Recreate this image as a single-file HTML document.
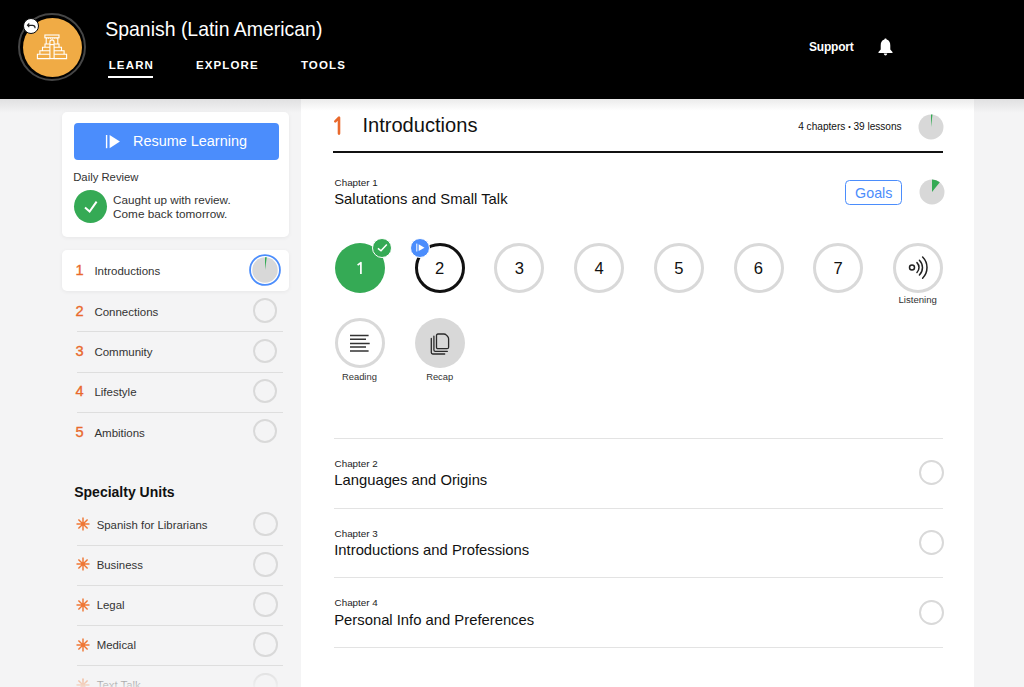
<!DOCTYPE html>
<html><head><meta charset="utf-8">
<style>
*{box-sizing:border-box;margin:0;padding:0}
html,body{width:1024px;height:687px;overflow:hidden;background:#f4f4f5;font-family:"Liberation Sans",sans-serif;color:#222}
.a{position:absolute;white-space:nowrap}
svg.a{overflow:visible}
</style></head><body>
<div class="a" style="left:0px;top:0px;width:1024px;height:99px;background:#000;"></div>
<div class="a" style="left:0px;top:99px;width:1024px;height:14px;background:linear-gradient(#e0e0e1,rgba(244,244,245,0));"></div>
<div class="a" style="left:18.00px;top:13.00px;width:68px;height:68px;border-radius:50%;border:2.4px solid #464646;background:transparent;"></div>
<div class="a" style="left:22.50px;top:17.50px;width:59px;height:59px;border-radius:50%;border:0px solid #f0ab45;background:#f0ab45;"></div>
<svg class="a" style="left:36px;top:33px" width="32" height="28" viewBox="0 0 32 28" fill="none" stroke="#fff" stroke-width="1.1">
<rect x="8.9" y="2" width="14.1" height="2.8"/>
<path d="M10.2 5.3 H21.8" stroke-dasharray="0.9 1" stroke-width="1"/>
<path d="M10.2 4.8 V11 M21.8 4.8 V11"/>
<path d="M13.9 11.3 V9 A2.1 2.1 0 0 1 18.1 9 V11.3"/>
<rect x="13.9" y="11.6" width="4.2" height="14"/>
<path d="M13.9 11 H9 V14.2 H6.5 V17.7 H3.9 V21.2 H1.4 V25.6 H13.9 M9 14.2 H13.9 M6.5 17.7 H13.9 M3.9 21.2 H13.9"/>
<path d="M18.1 11 H23 V14.2 H25.5 V17.7 H28.1 V21.2 H30.6 V25.6 H18.1 M23 14.2 H18.1 M25.5 17.7 H18.1 M28.1 21.2 H18.1"/>
</svg>
<div class="a" style="left:22.60px;top:17.80px;width:16.5px;height:16.5px;border-radius:50%;border:1.6px solid #0a0a0a;background:#fff;"></div>
<svg class="a" style="left:25px;top:20px" width="12" height="12" viewBox="0 0 12 12" fill="none" stroke="#222" stroke-width="1.15"><path d="M4.3 3.5 L2.5 5.3 L4.3 7.1"/><path d="M2.7 5.3 H7.6 Q10 5.3 10 7.6 V8.2"/></svg>
<div class="a" style="left:105.24px;top:19.74px;font-size:19.45px;line-height:19.45px;font-weight:400;color:#fff;">Spanish (Latin American)</div>
<div class="a" style="left:108.69px;top:59.97px;font-size:11.5px;line-height:11.5px;font-weight:700;color:#fff;letter-spacing:1.15px;">LEARN</div>
<div class="a" style="left:108px;top:76px;width:45px;height:2px;background:#fff;"></div>
<div class="a" style="left:195.89px;top:59.97px;font-size:11.5px;line-height:11.5px;font-weight:700;color:#fff;letter-spacing:1.15px;">EXPLORE</div>
<div class="a" style="left:300.89px;top:59.97px;font-size:11.5px;line-height:11.5px;font-weight:700;color:#fff;letter-spacing:1.15px;">TOOLS</div>
<div class="a" style="left:808.96px;top:40.84px;font-size:12px;line-height:12px;font-weight:700;color:#fff;letter-spacing:-0.2px;">Support</div>
<svg class="a" style="left:878px;top:38px" width="15" height="18" viewBox="0 0 15 18" fill="#fff"><path d="M7.5 0.5 C8.3 0.5 8.6 1 8.6 1.6 C11.3 2.3 12.3 4.6 12.3 7.5 V11.5 L14.5 14 V15 H0.5 V14 L2.7 11.5 V7.5 C2.7 4.6 3.7 2.3 6.4 1.6 C6.4 1 6.7 0.5 7.5 0.5 Z"/><path d="M5.8 15.6 H9.2 C9.2 16.7 8.5 17.4 7.5 17.4 C6.5 17.4 5.8 16.7 5.8 15.6Z"/></svg>
<div class="a" style="left:301px;top:99px;width:673px;height:588px;background:#fff;"></div>
<div class="a" style="left:301px;top:99px;width:673px;height:12px;background:linear-gradient(#ebebeb,rgba(255,255,255,0));"></div>
<div class="a" style="left:62px;top:112px;width:227px;height:125px;background:#fff;border-radius:5px;box-shadow:0 1px 4px rgba(0,0,0,0.06)"></div>
<div class="a" style="left:74px;top:122.5px;width:205px;height:37.5px;background:#4b8dfc;border-radius:4px"></div>
<svg class="a" style="left:104px;top:134px" width="18" height="16" viewBox="0 0 18 16" fill="#fff"><rect x="1.9" y="1" width="1.4" height="13.2"/><path d="M5.6 1 L15.9 7.6 L5.6 14.2 Z"/></svg>
<div class="a" style="left:132.99px;top:134.47px;font-size:14.45px;line-height:14.45px;font-weight:400;color:#fff;">Resume Learning</div>
<div class="a" style="left:73.21px;top:172.03px;font-size:11.3px;line-height:11.3px;font-weight:400;color:#333;">Daily Review</div>
<div class="a" style="left:74.20px;top:190.20px;width:33px;height:33px;border-radius:50%;border:0px solid #35aa55;background:#35aa55;"></div>
<svg class="a" style="left:80px;top:197px" width="22" height="20" viewBox="0 0 22 20" fill="none" stroke="#fff" stroke-width="2"><path d="M5 10.5 L9.6 14.5 L16.6 4.6"/></svg>
<div class="a" style="left:113.08px;top:193.90px;font-size:11.7px;line-height:11.7px;font-weight:400;color:#333;">Caught up with review.</div>
<div class="a" style="left:113.08px;top:208.15px;font-size:11.75px;line-height:11.75px;font-weight:400;color:#333;">Come back tomorrow.</div>
<div class="a" style="left:62px;top:250.3px;width:227px;height:40.4px;background:#fff;border-radius:5px;box-shadow:0 1px 4px rgba(0,0,0,0.06)"></div>
<div class="a" style="left:75.38px;top:263.24px;font-size:14.6px;line-height:14.6px;font-weight:400;color:#e9692c;-webkit-text-stroke:0.35px #e9692c;">1</div>
<div class="a" style="left:94.39px;top:266.17px;font-size:11.5px;line-height:11.5px;font-weight:400;color:#333;">Introductions</div>
<div class="a" style="left:75.38px;top:304.04px;font-size:14.6px;line-height:14.6px;font-weight:400;color:#e9692c;-webkit-text-stroke:0.35px #e9692c;">2</div>
<div class="a" style="left:94.39px;top:306.97px;font-size:11.5px;line-height:11.5px;font-weight:400;color:#333;">Connections</div>
<div class="a" style="left:252.75px;top:298.35px;width:24.5px;height:24.5px;border-radius:50%;border:2px solid #d9d9d9;background:transparent;"></div>
<div class="a" style="left:75.38px;top:344.24px;font-size:14.6px;line-height:14.6px;font-weight:400;color:#e9692c;-webkit-text-stroke:0.35px #e9692c;">3</div>
<div class="a" style="left:94.39px;top:347.17px;font-size:11.5px;line-height:11.5px;font-weight:400;color:#333;">Community</div>
<div class="a" style="left:252.75px;top:338.55px;width:24.5px;height:24.5px;border-radius:50%;border:2px solid #d9d9d9;background:transparent;"></div>
<div class="a" style="left:75.38px;top:384.44px;font-size:14.6px;line-height:14.6px;font-weight:400;color:#e9692c;-webkit-text-stroke:0.35px #e9692c;">4</div>
<div class="a" style="left:94.39px;top:387.37px;font-size:11.5px;line-height:11.5px;font-weight:400;color:#333;">Lifestyle</div>
<div class="a" style="left:252.75px;top:378.75px;width:24.5px;height:24.5px;border-radius:50%;border:2px solid #d9d9d9;background:transparent;"></div>
<div class="a" style="left:75.38px;top:424.64px;font-size:14.6px;line-height:14.6px;font-weight:400;color:#e9692c;-webkit-text-stroke:0.35px #e9692c;">5</div>
<div class="a" style="left:94.39px;top:427.57px;font-size:11.5px;line-height:11.5px;font-weight:400;color:#333;">Ambitions</div>
<div class="a" style="left:252.75px;top:418.95px;width:24.5px;height:24.5px;border-radius:50%;border:2px solid #d9d9d9;background:transparent;"></div>
<div class="a" style="left:76.5px;top:331.4px;width:206px;height:1px;background:#dedede;"></div>
<div class="a" style="left:76.5px;top:371.6px;width:206px;height:1px;background:#dedede;"></div>
<div class="a" style="left:76.5px;top:411.8px;width:206px;height:1px;background:#dedede;"></div>
<svg class="a" style="left:248.3px;top:253.2px" width="34" height="34"><circle cx="17" cy="17" r="14.95" fill="#fff" stroke="#4b8dfc" stroke-width="1.8"/></svg>
<svg class="a" style="left:252.3px;top:257.2px" width="26" height="26" viewBox="0 0 26 26"><circle cx="13" cy="13" r="12.75" fill="#d8d8d8"/><path d="M13 13 L13 0.25 A12.75 12.75 0 0 1 14.77 0.37 Z" fill="#35aa55"/></svg>
<div class="a" style="left:74.22px;top:484.65px;font-size:14px;line-height:14px;font-weight:700;color:#111;">Specialty Units</div>
<svg class="a" style="left:76px;top:517.10px" width="14" height="14" viewBox="0 0 14 14" stroke="#ef7735" stroke-width="1.45"><path d="M7 0.5 V13.5 M0.5 7 H13.5 M2.4 2.4 L11.6 11.6 M11.6 2.4 L2.4 11.6"/></svg>
<div class="a" style="left:96.70px;top:519.65px;font-size:11.4px;line-height:11.4px;font-weight:400;color:#333;">Spanish for Librarians</div>
<div class="a" style="left:253.15px;top:511.85px;width:24.5px;height:24.5px;border-radius:50%;border:2px solid #d9d9d9;background:transparent;"></div>
<div class="a" style="left:76.5px;top:544.5px;width:206px;height:1px;background:#dedede;"></div>
<svg class="a" style="left:76px;top:557.30px" width="14" height="14" viewBox="0 0 14 14" stroke="#ef7735" stroke-width="1.45"><path d="M7 0.5 V13.5 M0.5 7 H13.5 M2.4 2.4 L11.6 11.6 M11.6 2.4 L2.4 11.6"/></svg>
<div class="a" style="left:96.70px;top:559.85px;font-size:11.4px;line-height:11.4px;font-weight:400;color:#333;">Business</div>
<div class="a" style="left:253.15px;top:552.05px;width:24.5px;height:24.5px;border-radius:50%;border:2px solid #d9d9d9;background:transparent;"></div>
<div class="a" style="left:76.5px;top:584.7px;width:206px;height:1px;background:#dedede;"></div>
<svg class="a" style="left:76px;top:597.50px" width="14" height="14" viewBox="0 0 14 14" stroke="#ef7735" stroke-width="1.45"><path d="M7 0.5 V13.5 M0.5 7 H13.5 M2.4 2.4 L11.6 11.6 M11.6 2.4 L2.4 11.6"/></svg>
<div class="a" style="left:96.70px;top:600.05px;font-size:11.4px;line-height:11.4px;font-weight:400;color:#333;">Legal</div>
<div class="a" style="left:253.15px;top:592.25px;width:24.5px;height:24.5px;border-radius:50%;border:2px solid #d9d9d9;background:transparent;"></div>
<div class="a" style="left:76.5px;top:624.9px;width:206px;height:1px;background:#dedede;"></div>
<svg class="a" style="left:76px;top:637.70px" width="14" height="14" viewBox="0 0 14 14" stroke="#ef7735" stroke-width="1.45"><path d="M7 0.5 V13.5 M0.5 7 H13.5 M2.4 2.4 L11.6 11.6 M11.6 2.4 L2.4 11.6"/></svg>
<div class="a" style="left:96.70px;top:640.25px;font-size:11.4px;line-height:11.4px;font-weight:400;color:#333;">Medical</div>
<div class="a" style="left:253.15px;top:632.45px;width:24.5px;height:24.5px;border-radius:50%;border:2px solid #d9d9d9;background:transparent;"></div>
<div class="a" style="left:76.5px;top:665.1px;width:206px;height:1px;background:#dedede;"></div>
<svg class="a" style="left:76px;top:677.90px" width="14" height="14" viewBox="0 0 14 14" stroke="#ef7735" stroke-width="1.45"><path d="M7 0.5 V13.5 M0.5 7 H13.5 M2.4 2.4 L11.6 11.6 M11.6 2.4 L2.4 11.6"/></svg>
<div class="a" style="left:96.70px;top:680.45px;font-size:11.4px;line-height:11.4px;font-weight:400;color:#333;">Text Talk</div>
<div class="a" style="left:253.15px;top:672.65px;width:24.5px;height:24.5px;border-radius:50%;border:2px solid #d9d9d9;background:transparent;"></div>
<div class="a" style="left:0px;top:667px;width:301px;height:20px;background:linear-gradient(rgba(244,244,245,0.15),rgba(244,244,245,0.8));"></div>
<svg class="a" style="left:330px;top:112px" width="14" height="26" fill="none" stroke="#e9692c" stroke-width="2.6" stroke-linecap="round" stroke-linejoin="round"><path d="M5.3 9.3 L9 5.6 V21.6"/></svg>
<div class="a" style="left:362.39px;top:115.49px;font-size:20.1px;line-height:20.1px;font-weight:400;color:#111;">Introductions</div>
<div class="a" style="left:798.19px;top:122.25px;font-size:10.1px;line-height:10.1px;font-weight:400;color:#111;">4 chapters <span style="font-size:7px;line-height:0;vertical-align:1px">&bull;</span> 39 lessons</div>
<svg class="a" style="left:918px;top:114px" width="26" height="26" viewBox="0 0 26 26"><circle cx="13" cy="13" r="12.5" fill="#d8d8d8"/><path d="M13 13 L13 0.5 A12.5 12.5 0 0 1 14.52 0.59 Z" fill="#35aa55"/></svg>
<div class="a" style="left:333px;top:151px;width:610px;height:2px;background:#111;"></div>
<div class="a" style="left:334.61px;top:178.10px;font-size:9.8px;line-height:9.8px;font-weight:400;color:#222;">Chapter 1</div>
<div class="a" style="left:334.26px;top:192.27px;font-size:14.8px;line-height:14.8px;font-weight:400;color:#111;">Salutations and Small Talk</div>
<div class="a" style="left:845.3px;top:179.8px;width:57px;height:24.9px;border:1.9px solid #4b8dfc;border-radius:4.5px"></div>
<div class="a" style="left:855.10px;top:185.80px;font-size:14.3px;line-height:14.3px;font-weight:400;color:#4b8dfc;">Goals</div>
<svg class="a" style="left:918.7px;top:179.3px" width="26" height="26" viewBox="0 0 26 26"><circle cx="13" cy="13" r="12.5" fill="#d8d8d8"/><path d="M13 13 L13 0.5 A12.5 12.5 0 0 1 20.81 3.24 Z" fill="#35aa55"/></svg>
<div class="a" style="left:335.00px;top:243.00px;width:50px;height:50px;border-radius:50%;border:0px solid #35aa55;background:#35aa55;"></div>
<svg class="a" style="left:350.00px;top:258px" width="20" height="20" fill="none" stroke="#fff" stroke-width="1.7" stroke-linejoin="round"><path d="M7.6 7.2 L10.9 4.6 V16"/></svg>
<div class="a" style="left:371.75px;top:237.75px;width:20px;height:20px;border-radius:50%;border:1.5px solid #fff;background:#35aa55;"></div>
<svg class="a" style="left:381.75px;top:247.75px" width="1" height="1" viewBox="0 0 1 1" fill="none" stroke="#fff" stroke-width="1.5"><path d="M-4.1 0.3 L-1 2.8 L4.8 -3.4"/></svg>
<div class="a" style="left:414.71px;top:243.00px;width:50px;height:50px;border-radius:50%;border:3px solid #111;background:transparent;"></div>
<div class="a" style="left:435.01px;top:260.75px;font-size:16.6px;line-height:16.6px;font-weight:400;color:#111;">2</div>
<div class="a" style="left:409.60px;top:237.50px;width:20px;height:20px;border-radius:50%;border:1.7px solid #fff;background:#4b8dfc;"></div>
<svg class="a" style="left:410px;top:238px" width="20" height="20" viewBox="0 0 20 20" fill="#fff"><rect x="6.3" y="5.6" width="1" height="7.9"/><path d="M8.7 6.3 L14.5 9.7 L8.7 13.1 Z"/></svg>
<div class="a" style="left:494.42px;top:243.00px;width:50px;height:50px;border-radius:50%;border:3px solid #d9d9d9;background:transparent;"></div>
<div class="a" style="left:514.72px;top:260.75px;font-size:16.6px;line-height:16.6px;font-weight:400;color:#111;">3</div>
<div class="a" style="left:574.13px;top:243.00px;width:50px;height:50px;border-radius:50%;border:3px solid #d9d9d9;background:transparent;"></div>
<div class="a" style="left:594.43px;top:260.75px;font-size:16.6px;line-height:16.6px;font-weight:400;color:#111;">4</div>
<div class="a" style="left:653.84px;top:243.00px;width:50px;height:50px;border-radius:50%;border:3px solid #d9d9d9;background:transparent;"></div>
<div class="a" style="left:674.14px;top:260.75px;font-size:16.6px;line-height:16.6px;font-weight:400;color:#111;">5</div>
<div class="a" style="left:733.55px;top:243.00px;width:50px;height:50px;border-radius:50%;border:3px solid #d9d9d9;background:transparent;"></div>
<div class="a" style="left:753.85px;top:260.75px;font-size:16.6px;line-height:16.6px;font-weight:400;color:#111;">6</div>
<div class="a" style="left:813.26px;top:243.00px;width:50px;height:50px;border-radius:50%;border:3px solid #d9d9d9;background:transparent;"></div>
<div class="a" style="left:833.56px;top:260.75px;font-size:16.6px;line-height:16.6px;font-weight:400;color:#111;">7</div>
<div class="a" style="left:892.97px;top:243.00px;width:50px;height:50px;border-radius:50%;border:3px solid #d9d9d9;background:transparent;"></div>
<svg class="a" style="left:906px;top:256px" width="24" height="24" viewBox="0 0 24 24" fill="none" stroke="#222" stroke-width="1.5" stroke-linecap="round"><circle cx="6" cy="11.6" r="2.5"/><path d="M10.95 6.65 A7 7 0 0 1 10.95 16.55"/><path d="M13.42 4.18 A10.5 10.5 0 0 1 13.42 19.02"/><path d="M16.61 1 A15 15 0 0 1 16.61 22.2"/></svg>
<div class="a" style="left:898.53px;top:295.37px;font-size:9.6px;line-height:9.6px;font-weight:400;color:#333;">Listening</div>
<div class="a" style="left:335.00px;top:318.30px;width:50px;height:50px;border-radius:50%;border:3px solid #d9d9d9;background:transparent;"></div>
<svg class="a" style="left:348px;top:332px" width="24" height="22" viewBox="0 0 24 22" stroke="#333" stroke-width="1.5"><path d="M2 3.6 H20.6 M2 7.3 H18 M2 11.4 H21.7 M2 15 H18 M2 19 H20.6"/></svg>
<div class="a" style="left:341.94px;top:371.64px;font-size:9.4px;line-height:9.4px;font-weight:400;color:#333;">Reading</div>
<div class="a" style="left:415.00px;top:318.30px;width:50px;height:50px;border-radius:50%;border:0px solid #d8d8d8;background:#d8d8d8;"></div>
<svg class="a" style="left:428px;top:331.7px" width="24" height="24" viewBox="0 0 24 24" fill="none" stroke="#2a2a2a" stroke-width="1.3" stroke-linecap="round"><path d="M10 2 H15.8 Q17.3 2 18.4 3.1 L19.5 4.2 Q20.6 5.3 20.6 6.8 V15.2 Q20.6 16.7 19.1 16.7 H10 Q8.5 16.7 8.5 15.2 V3.5 Q8.5 2 10 2 Z"/><path d="M5.9 4.2 V18 Q5.9 19.4 7.3 19.4 H19.3"/><path d="M3.3 6.5 V20.6 Q3.3 22 4.7 22 H16.7"/></svg>
<div class="a" style="left:426.14px;top:371.64px;font-size:9.4px;line-height:9.4px;font-weight:400;color:#333;">Recap</div>
<div class="a" style="left:334px;top:438px;width:609px;height:1px;background:#e3e3e3;"></div>
<div class="a" style="left:334px;top:507.5px;width:609px;height:1px;background:#e3e3e3;"></div>
<div class="a" style="left:334px;top:577.3px;width:609px;height:1px;background:#e3e3e3;"></div>
<div class="a" style="left:334px;top:647px;width:609px;height:1px;background:#e3e3e3;"></div>
<div class="a" style="left:334.61px;top:458.70px;font-size:9.8px;line-height:9.8px;font-weight:400;color:#222;">Chapter 2</div>
<div class="a" style="left:334.26px;top:472.87px;font-size:14.8px;line-height:14.8px;font-weight:400;color:#111;">Languages and Origins</div>
<div class="a" style="left:919.00px;top:460.10px;width:25px;height:25px;border-radius:50%;border:2px solid #d9d9d9;background:transparent;"></div>
<div class="a" style="left:334.61px;top:528.55px;font-size:9.8px;line-height:9.8px;font-weight:400;color:#222;">Chapter 3</div>
<div class="a" style="left:334.26px;top:542.72px;font-size:14.8px;line-height:14.8px;font-weight:400;color:#111;">Introductions and Professions</div>
<div class="a" style="left:919.00px;top:529.95px;width:25px;height:25px;border-radius:50%;border:2px solid #d9d9d9;background:transparent;"></div>
<div class="a" style="left:334.61px;top:598.40px;font-size:9.8px;line-height:9.8px;font-weight:400;color:#222;">Chapter 4</div>
<div class="a" style="left:334.26px;top:612.57px;font-size:14.8px;line-height:14.8px;font-weight:400;color:#111;">Personal Info and Preferences</div>
<div class="a" style="left:919.00px;top:599.80px;width:25px;height:25px;border-radius:50%;border:2px solid #d9d9d9;background:transparent;"></div>
</body></html>
